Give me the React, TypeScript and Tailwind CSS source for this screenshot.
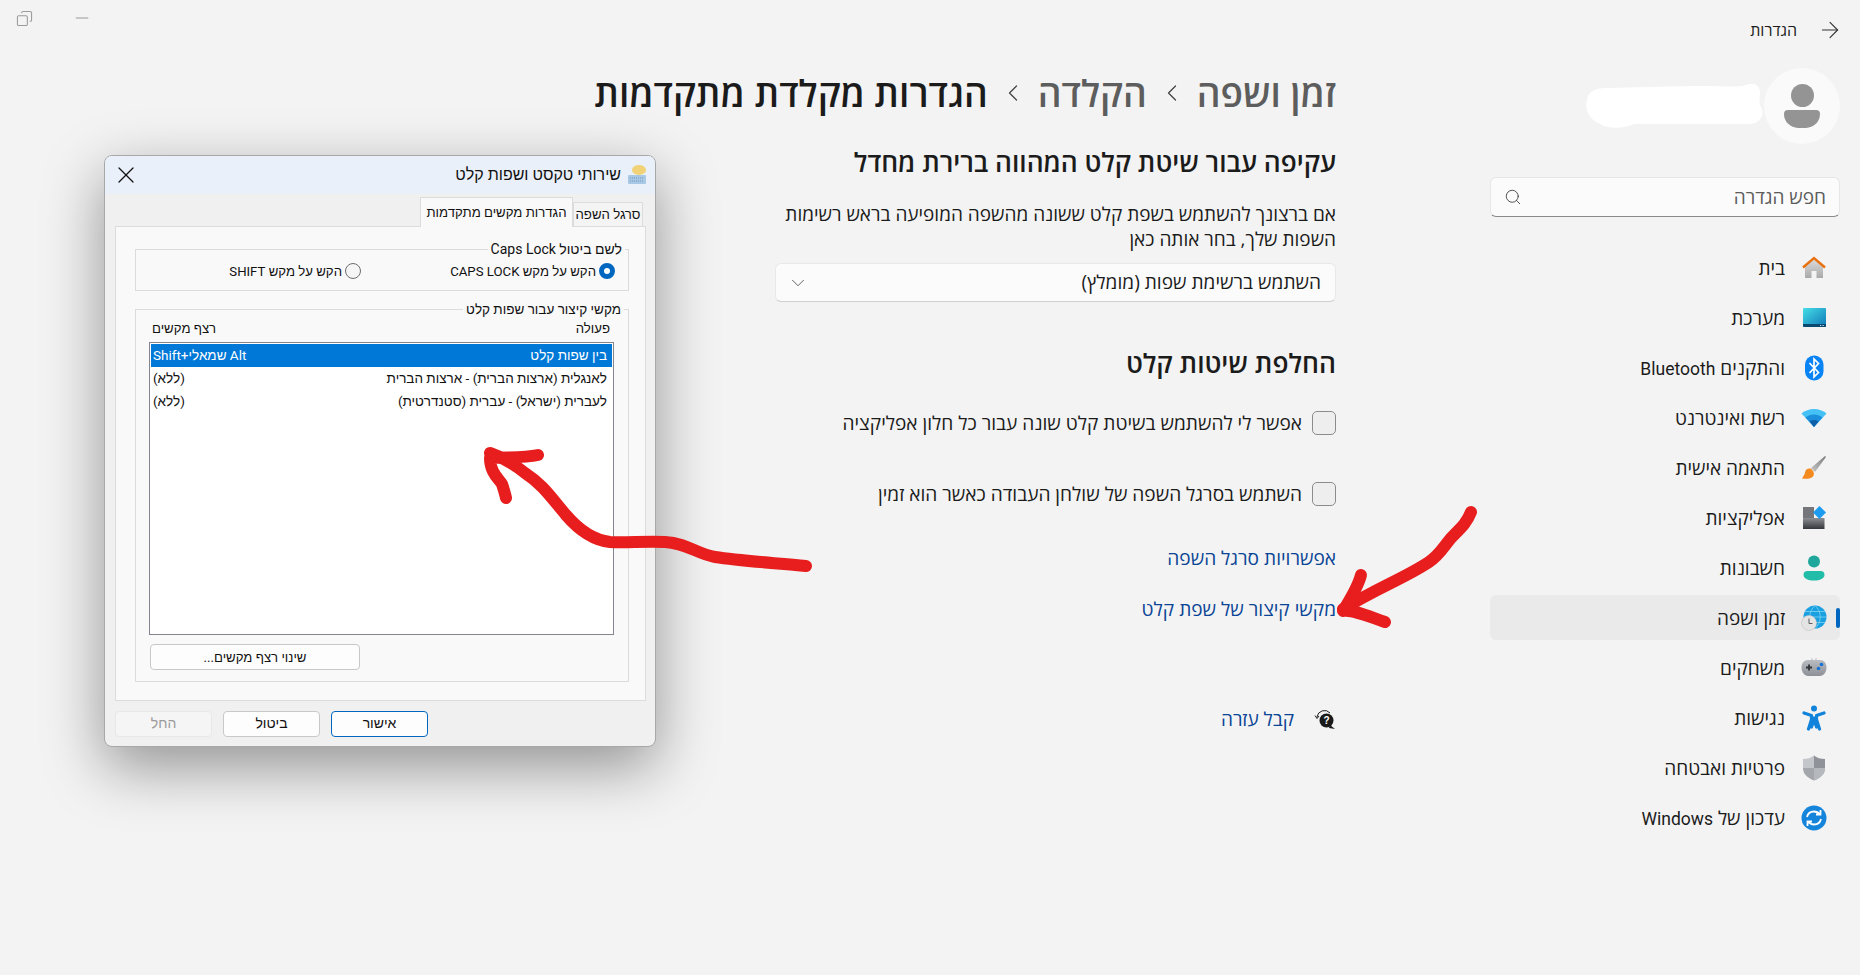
import {ArrowRight, ChevronDown, ChevronLeft, Copy, Minus, Search, X} from "lucide-react";
import type {ReactNode} from "react";

const HomeIcon = () => (
  <svg width="24" height="24" viewBox="0 0 24 24">
    <defs>
      <linearGradient id="homeBody" x1="0" y1="0" x2="0" y2="1">
        <stop offset="0" stopColor="#dcdcdc" />
        <stop offset="1" stopColor="#a9a9a9" />
      </linearGradient>
    </defs>
    <path d="M12 3 3 11v11h6.500v-7h5v7H21V11z" fill="url(#homeBody)" />
    <path d="M1 11.500 12 2l11 9.500" fill="none" stroke="#e8710f" strokeWidth="2.400" />
  </svg>
);

const SystemIcon = () => (
  <svg width="24" height="24" viewBox="0 0 24 24">
    <defs>
      <linearGradient id="sysBody" x1="0" y1="0" x2="1" y2="1">
        <stop offset="0" stopColor="#45dde6" />
        <stop offset="1" stopColor="#0f78b8" />
      </linearGradient>
    </defs>
    <rect x="1" y="2" width="23" height="19" rx="1" fill="url(#sysBody)" />
    <path d="M1 18h23v2a1 1 0 0 1-1 1H2a1 1 0 0 1-1-1z" fill="#0b4a70" />
    <rect x="18" y="19" width="1.200" height="1" fill="#cde" />
    <rect x="20.500" y="19" width="1.200" height="1" fill="#cde" />
  </svg>
);

const BluetoothIcon = () => (
  <svg width="24" height="26" viewBox="0 0 24 26">
    <rect x="3" y="0.500" width="18.500" height="25" rx="9" fill="#0a84f5" />
    <path d="m7.500 8 9 9.500-4.500 4.500V4l4.500 4.500-9 9.500" fill="none" stroke="#fff" strokeWidth="1.700" />
  </svg>
);

const WifiIcon = () => (
  <svg width="26" height="24" viewBox="0 0 26 24">
    <path d="M0.500 7.500C7 1.500 19 1.500 25.500 7.500L13 21z" fill="#45c1f5" />
    <path d="M4.500 11.500c5-4 12-4 17 0L13 21z" fill="#1b8fdc" />
    <path d="M8.500 15.500c2.500-2 6.500-2 9 0L13 21z" fill="#0d5fa8" />
  </svg>
);

const BrushIcon = () => (
  <svg width="26" height="26" viewBox="0 0 26 26">
    <defs>
      <linearGradient id="brushHandle" x1="0" y1="1" x2="1" y2="0">
        <stop offset="0" stopColor="#c9c9c9" />
        <stop offset="1" stopColor="#7b7b7b" />
      </linearGradient>
    </defs>
    <path d="M10 13 24 1l1 1-11 15z" fill="url(#brushHandle)" />
    <path d="M9.500 13.500c-3-.5-5 1-5.500 4-.3 2-1.500 3.500-3 6 4 .5 9 .5 11-2 1.500-2 1.500-5-2.500-8z" fill="#f58a1f" />
  </svg>
);

const AppsIcon = () => (
  <svg width="24" height="24" viewBox="0 0 24 24">
    <defs>
      <linearGradient id="appsDark" x1="0" y1="0" x2="0" y2="1">
        <stop offset="0" stopColor="#8d8f94" />
        <stop offset="1" stopColor="#33363b" />
      </linearGradient>
    </defs>
    <rect x="1" y="1" width="11" height="11" fill="#74767b" />
    <rect x="1" y="12" width="11" height="11" fill="url(#appsDark)" />
    <rect x="12" y="12" width="10.500" height="11" fill="url(#appsDark)" />
    <path d="m17.500 0 6.500 6.500-6.500 6.500L11 6.500z" fill="#1c9cf0" />
  </svg>
);

const AccountIcon = () => (
  <svg width="24" height="26" viewBox="0 0 24 26">
    <circle cx="12" cy="6.500" r="6" fill="#1ea79a" />
    <path d="M1.500 20a4 4 0 0 1 4-4h13a4 4 0 0 1 4 4c0 3.500-4.500 5.500-10.500 5.500S1.500 23.500 1.500 20z" fill="#22bda8" />
  </svg>
);

const GlobeClockIcon = () => (
  <svg width="26" height="26" viewBox="0 0 26 26">
    <circle cx="14" cy="12" r="11.500" fill="#1a9fe0" />
    <path d="M2.500 12h23M14 .5c-7 6-7 17 0 23M14 .5c7 6 7 17 0 23M4 6.500h20M4 17.500h20" fill="none" stroke="#7dd4f3" strokeWidth="0.800" />
    <circle cx="8" cy="18" r="7.500" fill="#e4e4e4" stroke="#c2c2c2" strokeWidth="0.600" />
    <path d="M8 13.500V18.500h3.500" fill="none" stroke="#5d5d5d" strokeWidth="1" />
  </svg>
);

const GamepadIcon = () => (
  <svg width="26" height="20" viewBox="0 0 26 20">
    <defs>
      <linearGradient id="padBody" x1="0" y1="0" x2="0" y2="1">
        <stop offset="0" stopColor="#b9bcc1" />
        <stop offset="1" stopColor="#8d9096" />
      </linearGradient>
    </defs>
    <path d="M7 2h12c4 0 6.500 3 6.500 7.500S22.500 18 19 18H7C3.500 18 .5 14 .5 9.500S3 2 7 2z" fill="url(#padBody)" />
    <path d="M5 9.500h6M8 6.500v6" stroke="#33363b" strokeWidth="1.800" />
    <circle cx="20.500" cy="6.500" r="1.800" fill="#1673d6" />
    <circle cx="17.500" cy="10.500" r="1.800" fill="#1673d6" />
    <circle cx="11" cy="1" r="0.500" fill="#666" />
    <circle cx="15" cy="1" r="0.500" fill="#666" />
  </svg>
);

const AccessIcon = () => (
  <svg width="24" height="26" viewBox="0 0 24 26">
    <circle cx="12" cy="3.500" r="3" fill="#1283da" />
    <path d="M2 8 9.500 10.500v4l-3 9.500M22 8 14.500 10.500v4l3 9.500M9.500 13h5M12 14l-2.500 8M12 14l2.500 8" fill="none" stroke="#1283da" strokeWidth="3.200" strokeLinecap="round" strokeLinejoin="round" />
  </svg>
);

const ShieldIcon = () => (
  <svg width="24" height="26" viewBox="0 0 24 26">
    <path d="M12 .5c3 2.500 6.500 3.500 11 3.500v9c0 6-4.500 10-11 12.500z" fill="#8f9298" />
    <path d="M12 .5C9 3 5.500 4 1 4v9h11z" fill="#c3c6ca" />
    <path d="M1 13c0 6 4.500 10 11 12.500V13z" fill="#a3a6aa" />
    <path d="M12 13h11c0 6-4.500 10-11 12.500z" fill="#b5b8bc" />
  </svg>
);

const UpdateIcon = () => (
  <svg width="26" height="26" viewBox="0 0 26 26">
    <circle cx="13" cy="13" r="12.500" fill="#1585dc" />
    <path d="M6 12c.8-3.500 3.600-5.500 7-5.500 2.500 0 4.500 1 6 3M19.500 5v4.500H15M20 14c-.8 3.500-3.600 5.500-7 5.500-2.500 0-4.500-1-6-3M6.500 21v-4.500H11" fill="none" stroke="#fff" strokeWidth="1.800" />
  </svg>
);

const HelpIcon = () => (
  <svg width="22" height="22" viewBox="0 0 22 22">
    <path d="M3 9A7.500 7.500 0 0 1 16 5" fill="none" stroke="#1a1a1a" strokeWidth="1" />
    <path d="M1 7.500 3 10.500 5 8" fill="none" stroke="#1a1a1a" strokeWidth="1" />
    <circle cx="12.500" cy="12.500" r="7" fill="#1a1a1a" />
    <path d="M16 17l5 4-6-1z" fill="#1a1a1a" />
    <text x="12.500" y="16" fontSize="10" fontWeight="700" fontFamily="Liberation Sans" textAnchor="middle" fill="#fff">?</text>
  </svg>
);

const latin = "font-['Roboto',sans-serif] text-[17.5px]";

const navItems: { label: ReactNode; icon: ReactNode; active?: boolean }[] = [
  {label: "בית", icon: <HomeIcon />},
  {label: "מערכת", icon: <SystemIcon />},
  {label: <>והתקנים <span className={latin}>Bluetooth</span></>, icon: <BluetoothIcon />},
  {label: "רשת ואינטרנט", icon: <WifiIcon />},
  {label: "התאמה אישית", icon: <BrushIcon />},
  {label: "אפליקציות", icon: <AppsIcon />},
  {label: "חשבונות", icon: <AccountIcon />},
  {label: "זמן ושפה", icon: <GlobeClockIcon />, active: true},
  {label: "משחקים", icon: <GamepadIcon />},
  {label: "נגישות", icon: <AccessIcon />},
  {label: "פרטיות ואבטחה", icon: <ShieldIcon />},
  {label: <>עדכון של <span className={latin}>Windows</span></>, icon: <UpdateIcon />},
];

function Sidebar() {
  return (
    <aside className="mr-5 w-[350px] shrink-0 pt-2">
      <div className="flex h-[76px] items-center">
        <div className="flex h-[76px] w-[76px] shrink-0 flex-col items-center justify-center rounded-full bg-[#fafafa]">
          <div className="h-[23px] w-[23px] rounded-full bg-[#949494]" />
          <div className="mt-[3px] h-[18px] w-[36px] rounded-t-[5px] rounded-b-[18px] bg-[#949494]" />
        </div>
        <svg width="180" height="48" viewBox="0 0 180 48">
          <path d="M178 27c2 6-2 15-12 15H50c-12 5-26 5-34 0C6 38 0 28 3 18 4 10 10 6 22 6c40-1 70-2 100-2 20 0 30 2 40-1 8-3 14 0 14 8 0 6-2 10 2 16z" fill="#fff" />
        </svg>
      </div>

      <div className="mt-[33px] flex h-10 items-center justify-between rounded-md border border-[#e6e6e6] border-b-[#8a8a8a] bg-[#fbfbfb] pr-[13px] pl-[13px]">
        <span className="text-[19px] text-[#5c5c5c]">חפש הגדרה</span>
        <Search size={18} strokeWidth={1.1} color="#333" />
      </div>

      <nav className="mt-7">
        {navItems.map((item, index) => (
          <div
            key={index}
            className={`relative mb-[5px] flex h-[45px] items-center gap-[16px] rounded-md pr-[13px] ${item.active ? "bg-[#eaeaea]" : ""}`}
          >
            <span className="flex w-[26px] shrink-0 items-center justify-center">{item.icon}</span>
            <span className="pt-px text-[19px] text-[#1b1b1b]">{item.label}</span>
            {item.active && <span className="absolute top-[13px] right-0 h-5 w-1 rounded-full bg-[#0067c0]" />}
          </div>
        ))}
      </nav>
    </aside>
  );
}

function Breadcrumb() {
  return (
    <div className="flex h-[50px] items-center text-[37px] font-semibold whitespace-nowrap">
      <span className="text-[#5d5d5d]">זמן ושפה</span>
      <ChevronLeft size={28} color="#444" strokeWidth={1.1} className="mx-[11px]" />
      <span className="text-[#5d5d5d]">הקלדה</span>
      <ChevronLeft size={28} color="#444" strokeWidth={1.1} className="mx-[11px]" />
      <span className="text-[#1b1b1b]">הגדרות מקלדת מתקדמות</span>
    </div>
  );
}

function CheckRow({children}: { children: ReactNode }) {
  return (
    <div className="flex h-6 items-center gap-[10px]">
      <span className="h-6 w-6 shrink-0 rounded-[5px] border border-[#8c8c8c] bg-[#eeeeee]" />
      <span className="text-[19.1px] text-[#1b1b1b]">{children}</span>
    </div>
  );
}

function Content() {
  return (
    <main className="mr-[154px] w-[800px] shrink-0 pt-2">
      <Breadcrumb />
      <div className="w-[561px]">
        <h2 className="mt-[26px] text-[26.3px] leading-[36px] font-semibold text-[#1b1b1b]">עקיפה עבור שיטת קלט המהווה ברירת מחדל</h2>
        <p className="mt-[22px] text-[19px] leading-[25px] text-[#1b1b1b]">
          אם ברצונך להשתמש בשפת קלט ששונה מהשפה המופיעה בראש רשימות השפות שלך, בחר אותה כאן
        </p>
        <div className="mt-[11px] flex h-[39px] items-center justify-between rounded-md border border-[#e8e8e8] border-b-[#cfcfcf] bg-[#fbfbfb] pr-[14px] pl-[11px]">
          <span className="text-[19.1px] text-[#1b1b1b]">השתמש ברשימת שפות (מומלץ)</span>
          <ChevronDown size={22} color="#555" strokeWidth={1} />
        </div>
        <h2 className="mt-[43px] text-[26.4px] leading-[36px] font-semibold text-[#1b1b1b]">החלפת שיטות קלט</h2>
        <div className="mt-[30px] flex flex-col gap-[47px]">
          <CheckRow>אפשר לי להשתמש בשיטת קלט שונה עבור כל חלון אפליקציה</CheckRow>
          <CheckRow>השתמש בסרגל השפה של שולחן העבודה כאשר הוא זמין</CheckRow>
        </div>
        <div className="mt-[40px] flex flex-col gap-[26px] text-[19.1px] leading-[25px] text-[#0a4596]">
          <a>אפשרויות סרגל השפה</a>
          <a>מקשי קיצור של שפת קלט</a>
        </div>
        <div className="mt-[83px] flex items-center gap-[20px]">
          <HelpIcon />
          <a className="text-[19px] text-[#0a4596]">קבל עזרה</a>
        </div>
      </div>
    </main>
  );
}

function DialogButton({children, variant}: { children: ReactNode; variant?: "primary" | "disabled" }) {
  const look =
    variant === "primary"
      ? "border-[#0067c0] bg-[#fdfdfd] text-[#111]"
      : variant === "disabled"
        ? "border-[#e8e8e8] bg-[#f5f5f5] text-[#9b9b9b]"
        : "border-[#c8c8c8] bg-[#fdfdfd] text-[#111]";
  return (
    <button type="button" className={`flex h-[26px] w-[97px] items-center justify-center rounded-[4px] border text-[14px] ${look}`}>
      {children}
    </button>
  );
}

function LanguageDialog() {
  return (
    <div className="absolute top-[155px] left-[104px] flex h-[592px] w-[552px] flex-col overflow-hidden rounded-lg border border-[#a8a8a8] bg-[#f0f0f0] font-['Roboto',sans-serif] text-[13.2px] text-[#111] shadow-[0_20px_60px_rgba(0,0,0,0.4)]">
      <div className="flex h-[38px] shrink-0 items-center justify-between bg-[#e9f0fa] pr-[8px] pl-[7px]">
        <div className="flex items-center gap-[6px]">
          <svg width="20" height="22" viewBox="0 0 20 22">
            <ellipse cx="12" cy="6" rx="7" ry="5" fill="#f2d277" />
            <rect x="1" y="11" width="18" height="9" rx="1" fill="#a9c8e6" />
            <path d="M3 14h14M3 17h14" stroke="#6f97bd" strokeWidth="1" strokeDasharray="1 1" />
          </svg>
          <span className="text-[16px]">שירותי טקסט ושפות קלט</span>
        </div>
        <X size={28} strokeWidth={1.1} color="#111" />
      </div>

      <div className="flex flex-1 flex-col pr-[9px] pl-[10px]">
        <div className="flex h-[32px] shrink-0 items-end pr-[3px]">
          <div className="-mb-px flex h-[25px] w-[70px] items-center justify-center border border-[#dcdcdc] bg-[#f4f4f4]">סרגל השפה</div>
          <div className="relative z-10 -mb-px flex h-[30px] w-[153px] items-center justify-center border border-b-0 border-[#dcdcdc] bg-[#f9f9f9]">הגדרות מקשים מתקדמות</div>
        </div>
        <div className="flex h-[475px] shrink-0 flex-col border border-[#dcdcdc] bg-[#f9f9f9] pt-[14px] pr-[16px] pl-[19px]">
          <fieldset className="h-[50px] shrink-0 border border-[#dcdcdc]">
            <legend className="mr-[3px] px-[3px] text-[14px] leading-[16px]">לשם ביטול Caps Lock</legend>
            <div className="flex h-[29px] items-center pr-[13px]">
              <div className="flex w-[254px] items-center gap-[3px]">
                <span className="h-4 w-4 rounded-full border-[5px] border-[#0067c0] bg-white" />
                <span>הקש על מקש CAPS LOCK</span>
              </div>
              <div className="flex items-center gap-[3px]">
                <span className="h-4 w-4 rounded-full border border-[#6e6e6e] bg-[#f5f5f5]" />
                <span>הקש על מקש SHIFT</span>
              </div>
            </div>
          </fieldset>

          <fieldset className="mt-[10px] h-[381px] shrink-0 border border-[#dcdcdc] pr-[14px] pl-[13px]">
            <legend className="mr-[-10px] px-[3px] text-[13.5px] leading-[16px]">מקשי קיצור עבור שפות קלט</legend>
            <div className="flex h-[25px] items-center justify-between pr-[4px] pl-[3px] pb-[2px]">
              <span>פעולה</span>
              <span>רצף מקשים</span>
            </div>
            <div className="h-[293px] border border-[#84848e] bg-white p-px text-[13.5px]">
              <div className="flex h-[23px] items-center justify-between bg-[#0078d7] pr-[5px] pl-[2px] text-white">
                <span>בין שפות קלט</span>
                <span>Alt שמאלי+Shift</span>
              </div>
              <div className="flex h-[23px] items-center justify-between pr-[5px] pl-[2px]">
                <span>לאנגלית (ארצות הברית) - ארצות הברית</span>
                <span>(ללא)</span>
              </div>
              <div className="flex h-[23px] items-center justify-between pr-[5px] pl-[2px]">
                <span>לעברית (ישראל) - עברית (סטנדרטית)</span>
                <span>(ללא)</span>
              </div>
            </div>
            <div className="mt-[9px] flex justify-end">
              <button type="button" className="ml-px flex h-[26px] w-[210px] items-center justify-center rounded-[4px] border border-[#c8c8c8] bg-[#fdfdfd] pt-px">
                שינוי רצף מקשים...
              </button>
            </div>
          </fieldset>
        </div>
        <div className="flex flex-1 items-center justify-end gap-[11px]">
          <DialogButton variant="primary">אישור</DialogButton>
          <DialogButton>ביטול</DialogButton>
          <DialogButton variant="disabled">החל</DialogButton>
        </div>
      </div>
    </div>
  );
}

function RedArrows() {
  return (
    <svg className="pointer-events-none absolute inset-0" width="1860" height="975" viewBox="0 0 1860 975">
      <g fill="none" stroke="#e81e1e" strokeWidth="12" strokeLinecap="round" strokeLinejoin="round">
        <path d="M806 566c-30-3-65-5-91-9-18-3-28-14-50-15-20-1-40 1-55 0-18-2-32-13-44-27-16-19-24-31-41-42-12-10-24-16-35-20" />
        <path d="M538 455c-14 3-28 2-48 3 0 14 8 20 12 26 2 6 3 9 4 14" />
        <path d="M1471 512c-4 10-8 14-18 24-8 8-12 18-24 26-24 16-52 26-86 47" />
        <path d="M1361 575c-2 8-8 20-18 36 8-2 22 4 42 11" />
      </g>
    </svg>
  );
}

export default function App() {
  return (
    <div dir="rtl" className="relative h-[975px] w-full overflow-hidden bg-[#f3f3f3] font-['Open_Sans','Liberation_Sans',sans-serif]">
      <header className="flex h-[60px] items-start justify-between">
        <div className="flex h-[60px] items-center gap-[20px] pr-[17px]">
          <ArrowRight size={26} strokeWidth={1} color="#333" />
          <span className="text-[16px] text-[#1b1b1b]">הגדרות</span>
        </div>
        <div className="flex h-[36px] items-center gap-[39px] pl-[16px]">
          <Minus size={20} strokeWidth={1.2} color="#9a9a9a" />
          <Copy size={17} strokeWidth={1.5} color="#9a9a9a" className="-scale-x-100" />
        </div>
      </header>
      <div className="flex">
        <Sidebar />
        <Content />
      </div>
      <LanguageDialog />
      <RedArrows />
    </div>
  );
}
